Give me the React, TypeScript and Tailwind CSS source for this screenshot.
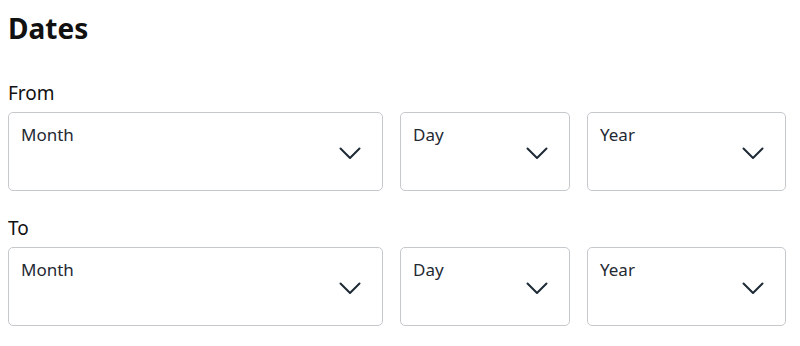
import React from "react";

function Chevron() {
  return (
    <svg width="22" height="13" viewBox="0 0 22 13" fill="none" className="shrink-0">
      <polyline
        points="1.5,1.5 11,11 20.5,1.5"
        stroke="#1e2a35"
        strokeWidth="2"
        strokeLinecap="round"
        strokeLinejoin="round"
      />
    </svg>
  );
}

function SelectBox({ label, width }: { label: string; width: string }) {
  return (
    <div
      className={`${width} flex h-[79px] items-start justify-between rounded-[5px] border border-[#c5c9cc] bg-white pl-[12px] pr-[21px] pt-[10px]`}
    >
      <span className="text-[17px] leading-[24px] text-[#1f2933]">{label}</span>
      <div className="mt-[24px]">
        <Chevron />
      </div>
    </div>
  );
}

function DateRow({ title }: { title: string }) {
  return (
    <div>
      <div className="text-[19px] leading-[24px] text-[#111]">{title}</div>
      <div className="mt-[7px] flex gap-[17px]">
        <SelectBox label="Month" width="w-[375px]" />
        <SelectBox label="Day" width="w-[170px]" />
        <SelectBox label="Year" width="w-[199px]" />
      </div>
    </div>
  );
}

export default function App() {
  return (
    <div
      className="h-[346px] w-[800px] bg-white px-[8px] pt-[11px]"
      style={{ fontFamily: '"Noto Sans", sans-serif' }}
    >
      <h2 className="text-[28px] font-bold leading-[34px] text-[#111]">Dates</h2>
      <div className="mt-[36px]">
        <DateRow title="From" />
      </div>
      <div className="mt-[25px]">
        <DateRow title="To" />
      </div>
    </div>
  );
}
